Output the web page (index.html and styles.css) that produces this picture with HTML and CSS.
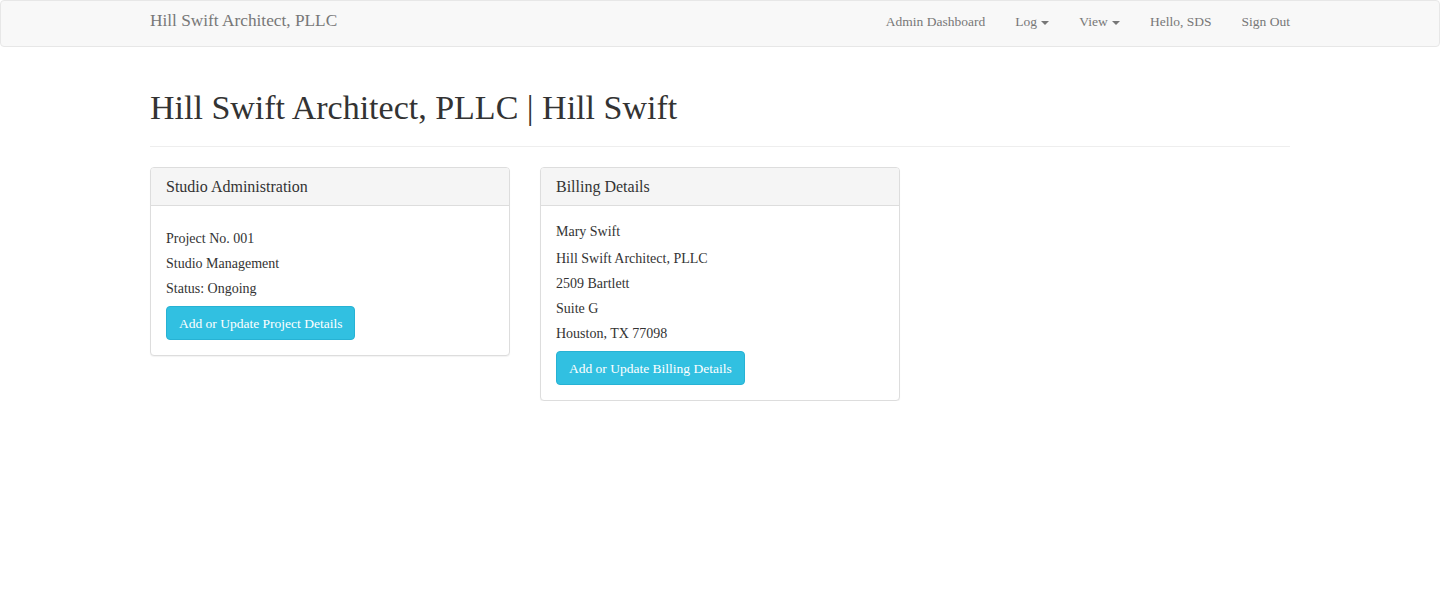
FILE: index.html
```html
<!DOCTYPE html>
<html lang="en">
<head>
<meta charset="utf-8">
<title>Hill Swift Architect, PLLC</title>
<link rel="stylesheet" href="styles.css">
</head>
<body>
<nav class="navbar">
  <div class="container nav-inner">
    <a class="brand" href="#">Hill Swift Architect, PLLC</a>
    <ul class="nav-links">
      <li><a href="#">Admin Dashboard</a></li>
      <li><a href="#">Log <span class="caret"></span></a></li>
      <li><a href="#">View <span class="caret"></span></a></li>
      <li><a href="#">Hello, SDS</a></li>
      <li><a href="#">Sign Out</a></li>
    </ul>
  </div>
</nav>
<main class="container">
  <div class="page-header">
    <h1>Hill Swift Architect, PLLC | Hill Swift</h1>
  </div>
  <div class="row">
    <section class="panel">
      <div class="panel-heading">Studio Administration</div>
      <div class="panel-body">
        <div class="lines lines-project">
          <p>Project No. 001</p>
          <p>Studio Management</p>
          <p>Status: Ongoing</p>
        </div>
        <a class="btn" href="#">Add or Update Project Details</a>
      </div>
    </section>
    <section class="panel">
      <div class="panel-heading">Billing Details</div>
      <div class="panel-body">
        <div class="lines">
          <p class="first">Mary Swift</p>
          <p>Hill Swift Architect, PLLC</p>
          <p>2509 Bartlett</p>
          <p>Suite G</p>
          <p>Houston, TX 77098</p>
        </div>
        <a class="btn" href="#">Add or Update Billing Details</a>
      </div>
    </section>
  </div>
</main>
</body>
</html>
```

FILE: styles.css
```css
* { box-sizing: border-box; }
html, body { margin: 0; padding: 0; }
body {
  font-family: "Liberation Serif", "Times New Roman", serif;
  font-size: 14px;
  line-height: 20px;
  color: #333;
  background: #fff;
}
a { text-decoration: none; }

.container {
  width: 1170px;
  margin: 0 auto;
  padding: 0 15px;
}

.navbar {
  height: 47px;
  background: #f8f8f8;
  border: 1px solid #e7e7e7;
  border-radius: 4px;
}
.nav-inner {
  display: flex;
  justify-content: space-between;
  align-items: flex-start;
}
.brand {
  color: #777;
  font-size: 17.3px;
  line-height: 20px;
  padding-top: 10px;
}
.nav-links {
  list-style: none;
  display: flex;
  margin: 0 -15px 0 0;
  padding: 0;
}
.nav-links a {
  display: block;
  color: #777;
  font-size: 13.5px;
  line-height: 20px;
  padding: 11px 15px 14px;
}
.caret {
  display: inline-block;
  width: 0;
  height: 0;
  margin-left: 1px;
  vertical-align: middle;
  border-top: 4px solid #777;
  border-left: 4px solid transparent;
  border-right: 4px solid transparent;
}

.page-header {
  margin: 40px 0 20px;
  padding-bottom: 9px;
  border-bottom: 1px solid #eee;
}
.page-header h1 {
  margin: 0 0 10px;
  padding-top: 2px;
  font-size: 34px;
  font-weight: 400;
  line-height: 1.1;
  color: #333;
  height: 39.6px;
}

.row {
  display: flex;
  gap: 30px;
  align-items: flex-start;
}
.panel {
  width: 360px;
  border: 1px solid #ddd;
  border-radius: 4px;
  background: #fff;
  box-shadow: 0 1px 1px rgba(0,0,0,.05);
}
.panel-heading {
  background: #f5f5f5;
  border-bottom: 1px solid #ddd;
  border-radius: 3px 3px 0 0;
  padding: 10px 15px;
  font-size: 16px;
  line-height: 17.6px;
  color: #333;
}
.panel-body {
  padding: 15px;
}
.lines {
  padding-top: 1px;
}
.lines p {
  margin: 0 0 5px;
}
.lines p:last-child {
  margin-bottom: 4px;
}
.lines p.first {
  margin-bottom: 7px;
}
.lines-project {
  padding-top: 8px;
}
.btn {
  display: inline-block;
  margin-top: 3px;
  padding: 7px 12px 5px;
  font-size: 13.5px;
  line-height: 20px;
  color: #fff;
  background: #31c0e1;
  border: 1px solid #27b2d4;
  border-radius: 4px;
}
```
